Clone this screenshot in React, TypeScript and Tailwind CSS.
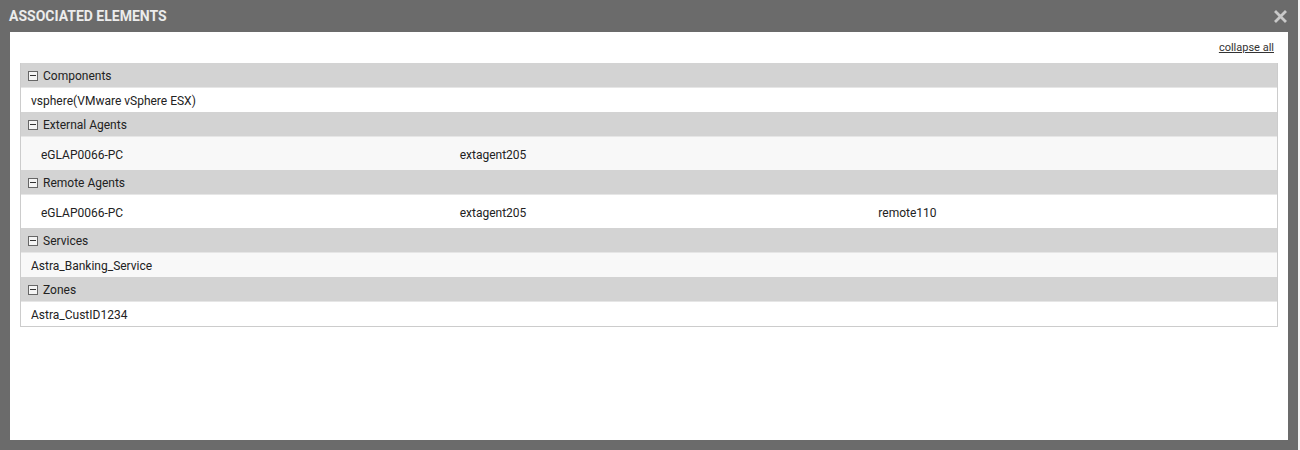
import { FC } from 'react'

interface Group {
  title: string
  rows: string[][]
  nested?: boolean
}

const groups: Group[] = [
  { title: 'Components', rows: [['vsphere(VMware vSphere ESX)']] },
  { title: 'External Agents', rows: [['eGLAP0066-PC', 'extagent205']], nested: true },
  { title: 'Remote Agents', rows: [['eGLAP0066-PC', 'extagent205', 'remote110']], nested: true },
  { title: 'Services', rows: [['Astra_Banking_Service']] },
  { title: 'Zones', rows: [['Astra_CustID1234']] },
]

const MinusBox: FC = () => (
  <span className="flex items-center justify-center w-[10px] h-[10px] border border-[#666] bg-[#f4f4f4] mr-[5px]">
    <span className="block w-[6px] h-[1.5px] bg-[#333]" />
  </span>
)

const CloseIcon: FC = () => (
  <svg width="13" height="13" viewBox="0 0 13 13" className="block mt-[1px]">
    <path d="M2 2 L11 11 M11 2 L2 11" stroke="#c9c9c9" strokeWidth="2.8" strokeLinecap="square" />
  </svg>
)

const GroupBlock: FC<{ group: Group; index: number }> = ({ group, index }) => {
  const bg = index % 2 === 1 ? 'bg-[#f8f8f8]' : 'bg-white'
  return (
    <div>
      <div className="flex items-center h-[24px] bg-[#d3d3d3] pl-[7px] pt-[1px] text-[12px] text-[#222]">
        <MinusBox />
        <span>{group.title}</span>
      </div>
      {group.rows.map((r, i) =>
        group.nested ? (
          <div key={i} className={`grid grid-cols-3 h-[34px] items-center pt-[2px] border-t border-[#e6e6e6] ${bg}`}>
            {r.map((c, j) => (
              <span key={j} className="pl-[20px] text-[12px] text-[#222]">
                {c}
              </span>
            ))}
          </div>
        ) : (
          <div key={i} className={`flex items-center h-[25px] pt-[1px] border-t border-[#e6e6e6] pl-[10px] text-[12px] text-[#222] ${bg}`}>
            {r[0]}
          </div>
        ),
      )}
    </div>
  )
}

export default function App() {
  return (
    <div className="w-[1300px] h-[450px] bg-[#f2f2f2] font-['Roboto',sans-serif]">
      <div className="w-[1298px] h-[450px] bg-[#6b6b6b] flex flex-col">
        <div className="flex items-center justify-between h-[32px] pl-[9px] pr-[11px]">
          <span className="text-[14px] font-bold text-[#ececec]">ASSOCIATED ELEMENTS</span>
          <CloseIcon />
        </div>
        <div className="flex-1 mx-[10px] mb-[10px] bg-white flex flex-col px-[10px]">
          <div className="flex justify-end h-[31px] items-center pt-[1px] pr-[4px]">
            <a href="#" className="text-[11px] text-[#333] underline">
              collapse all
            </a>
          </div>
          <div className="border border-t-0 border-[#cccccc]">
            {groups.map((g, i) => (
              <GroupBlock key={g.title} group={g} index={i} />
            ))}
          </div>
        </div>
      </div>
    </div>
  )
}
